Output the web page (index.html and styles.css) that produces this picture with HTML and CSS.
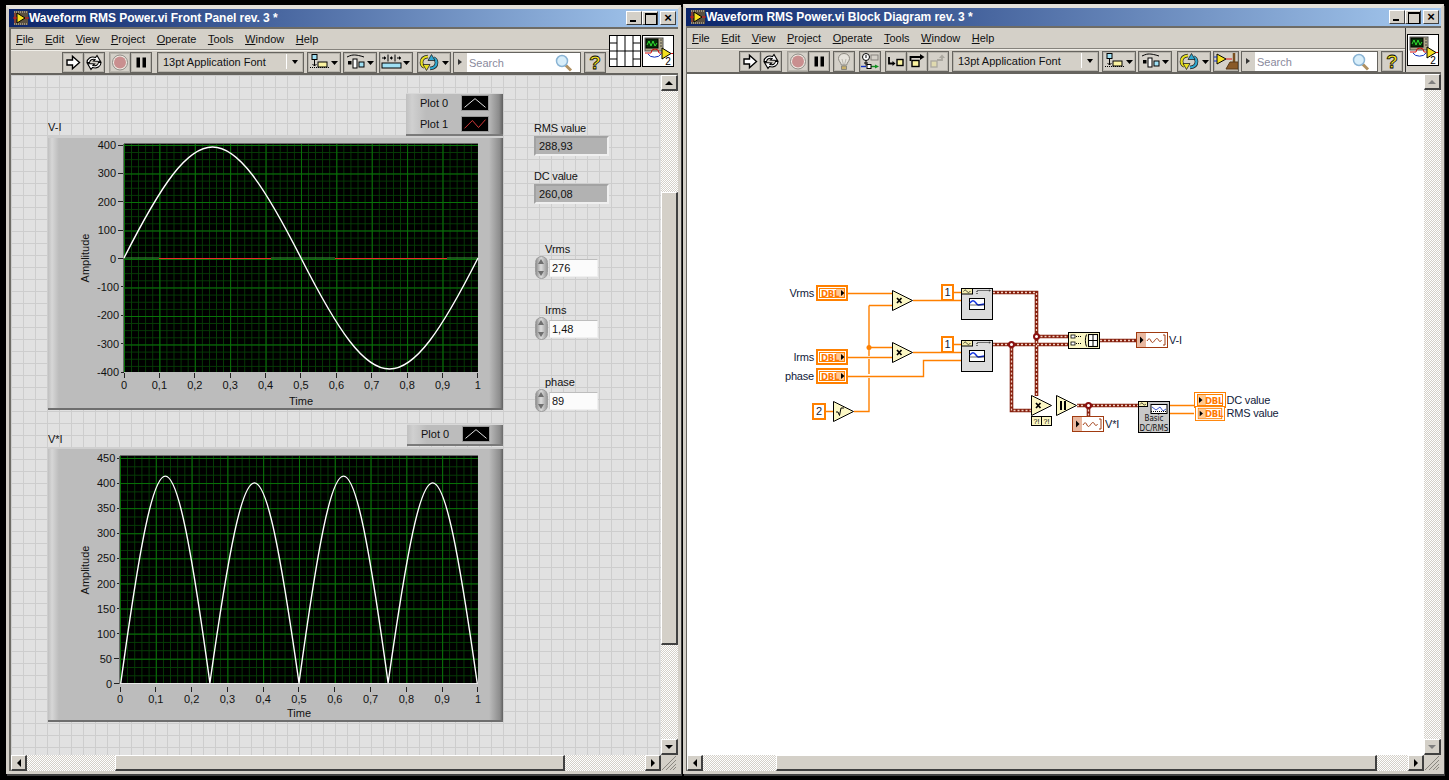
FILE: index.html
```html
<!DOCTYPE html>
<html lang="en">
<head>
<meta charset="utf-8">
<title>Waveform RMS Power.vi</title>
<link rel="stylesheet" href="styles.css">
</head>
<body>
<svg class="defs" aria-hidden="true">
  <symbol id="vi-mini" viewBox="0 0 16 16">
    <rect x="1" y="1" width="14" height="14" fill="#5a5040"/>
    <path d="M1 2h14M1 14h14" stroke="#d8d0b8" stroke-dasharray="1 1"/>
    <path d="M4 3v10l8-5z" fill="#f4e020" stroke="#000"/>
    <path d="M0 8h4M12 8h4" stroke="#e01010" stroke-width="1.2"/>
    <path d="M2 3v10" stroke="#e01010" stroke-width=".6"/>
  </symbol>
  <symbol id="run" viewBox="0 0 20 19"><path d="M4 7h5.500V3.200l7 6.300-7 6.300V12H4z" fill="#fff" stroke="#000" stroke-width="1.4"/></symbol>
  <symbol id="runc" viewBox="0 0 20 19">
    <g fill="#fff" stroke="#000" stroke-width="1.1">
      <path d="M3 9.500C3 5.500 7 3 11.500 4.500L13 2.500 16.500 8.500 9.500 8 11 6.500C8 5.800 6 7 5.500 9.500z"/>
      <path d="M17 9.500C17 13.500 13 16 8.500 14.500L7 16.500 3.500 10.500 10.500 11 9 12.500C12 13.200 14 12 14.500 9.500z"/>
    </g>
  </symbol>
  <symbol id="stop" viewBox="0 0 20 19"><circle cx="10" cy="9.500" r="7.500" fill="#f0ece4" stroke="#8e8b85"/><circle cx="10" cy="9.500" r="6" fill="#c98f8f"/></symbol>
  <symbol id="pause" viewBox="0 0 20 19"><path d="M5.500 4.500h3.500v10H5.500zM11.500 4.500h3.500v10h-3.500z"/></symbol>
  <symbol id="bulb" viewBox="0 0 20 19"><path d="M10 1.500c-3.500 0-5.500 2.500-5.500 5 0 2.500 2.500 4 2.800 6.500h5.400c.3-2.500 2.800-4 2.800-6.500 0-2.500-2-5-5.500-5z" fill="#e6e3dc" stroke="#8b8880"/><path d="M8 7l1.500 6M12 7l-1.500 6" stroke="#a5a29a" fill="none" stroke-width=".7"/><path d="M7.500 14h5v3.500h-5z" fill="#c9b06a" stroke="#8b8880"/></symbol>
  <symbol id="probe" viewBox="0 0 20 19"><circle cx="6" cy="5" r="3.500" fill="#fff" stroke="#000"/><path d="M6 3v3M6 8.500v5M4 11h4" stroke="#000" fill="none"/><rect x="11" y="3" width="7" height="5" fill="#d4d0c8" stroke="#85827c"/><path d="M1 14.500h5" stroke="#1030c0" stroke-width="1.400"/><path d="M10 14.500h6" stroke="#109020" stroke-width="1.400"/><rect x="7" y="12.500" width="4" height="4" fill="#fff" stroke="#000"/><path d="M15 12.500l4 2-4 2z" fill="#109020"/></symbol>
  <symbol id="stepin" viewBox="0 0 20 19"><path d="M3 5v6.500h4" stroke="#000" stroke-width="1.800" fill="none"/><path d="M6.500 9l3 2.500-3 2.500z"/><rect x="11" y="7.500" width="6" height="6" fill="#fbf3a0" stroke="#000" stroke-width="1.400"/></symbol>
  <symbol id="stepover" viewBox="0 0 20 19"><path d="M3.500 9V5h10" stroke="#000" stroke-width="1.800" fill="none"/><path d="M13 2l4.500 3-4.500 3z"/><rect x="5" y="8.500" width="7" height="6" fill="#fbf3a0" stroke="#000" stroke-width="1.400"/></symbol>
  <symbol id="stepout" viewBox="0 0 20 19" opacity=".6"><rect x="3" y="9" width="6" height="6" fill="#e8e2a0" stroke="#8f8c84" stroke-width="1.300"/><path d="M9 8h5V5" stroke="#8f8c84" stroke-width="1.800" fill="none"/><path d="M11 6l3-3.500 3 3.500z" fill="#8f8c84"/></symbol>
  <symbol id="align" viewBox="0 0 32 19">
    <rect x="4" y="1.500" width="5" height="5" fill="#9fe0f4" stroke="#000"/>
    <path d="M6.500 7v6M4.500 11l2 2 2-2" stroke="#000" fill="none"/>
    <path d="M2 14.500h20" stroke="#000" stroke-dasharray="1 1"/>
    <rect x="10" y="9" width="9" height="5" fill="#fbf3a0" stroke="#000"/>
    <path d="M23 8h7l-3.500 4z"/>
  </symbol>
  <symbol id="dist" viewBox="0 0 32 19">
    <path d="M3 4c4-2 6-2 7-2 1 0 4 0 10 2" stroke="#000" fill="none"/>
    <rect x="4" y="8" width="3.500" height="3.500"/>
    <rect x="9" y="6" width="4" height="9" fill="#fff" stroke="#000"/>
    <rect x="15" y="9" width="5" height="5" fill="#9fe0f4" stroke="#000"/>
    <path d="M23 8h7l-3.500 4z"/>
  </symbol>
  <symbol id="resize" viewBox="0 0 32 19">
    <path d="M8 1.500v7M15 1.500v7M2 5h4M10 5h3M17 5h4" stroke="#000" fill="none"/>
    <path d="M4 3l2 2-2 2zM12 3l-2 2 2 2zM19 3l2 2-2 2z"/>
    <rect x="2" y="10" width="19" height="5" fill="#9fe0f4" stroke="#000"/>
    <path d="M23 8h7l-3.500 4z"/>
  </symbol>
  <symbol id="reorder" viewBox="0 0 32 19">
    <path d="M10 3.500C5 4 3.500 7 3.500 9.500c0 2 1 3.500 3 4.500" stroke="#222" stroke-width="3.600" fill="none"/>
    <path d="M10 3.500C5 4 3.500 7 3.500 9.500c0 2 1 3.500 3 4.500" stroke="#e8e020" stroke-width="2.200" fill="none"/>
    <path d="M5 11.500h7l-3.500 6z" fill="#e8e020" stroke="#222" stroke-width=".8"/>
    <path d="M12 15.500c5-.5 6.500-3.500 6.500-6 0-2-1-3.500-3-4.500" stroke="#222" stroke-width="3.600" fill="none"/>
    <path d="M12 15.500c5-.5 6.500-3.500 6.500-6 0-2-1-3.500-3-4.500" stroke="#30a8d0" stroke-width="2.200" fill="none"/>
    <path d="M10 7.500h7l-3.500-6z" fill="#30a8d0" stroke="#222" stroke-width=".8"/>
    <path d="M24 8h7l-3.500 4z"/>
  </symbol>
  <symbol id="clean" viewBox="0 0 24 19">
    <path d="M3 2v10l9-5z" fill="#f4e020" stroke="#000"/>
    <path d="M0 5h3M0 9h3" stroke="#1030c0"/><path d="M12 7h6" stroke="#e01010"/>
    <path d="M20 1v9" stroke="#7a5020" stroke-width="2.500"/>
    <path d="M12 17l4-7h8v7z" fill="#8a5a28" stroke="#5a3a18"/>
  </symbol>
  <symbol id="mag" viewBox="0 0 18 18"><path d="M10.500 11l5.500 5.500" stroke="#b09060" stroke-width="3"/><circle cx="7" cy="7" r="5.500" fill="#d8eefa" stroke="#8ab4d4" stroke-width="1.500"/></symbol>
  <symbol id="viicon" viewBox="0 0 32 32">
    <rect x=".5" y=".5" width="31" height="31" fill="#fff" stroke="#000"/>
    <rect x="3" y="3" width="18" height="13" fill="#b0a888" stroke="#555"/>
    <rect x="4" y="4" width="12" height="9" fill="#083008" stroke="#000"/>
    <path d="M5 10l2-4 2 5 2-5 2 5 2-3" stroke="#30e030" fill="none"/>
    <path d="M18 5h2M18 8h2M18 11h2" stroke="#444"/>
    <path d="M3 18h6a4 4 0 0 1 8 0h5" stroke="#d01010" fill="none"/>
    <path d="M6 19a7 5 0 0 0 13 0" stroke="#1030c0" fill="none"/>
    <path d="M20 13v11l9-5.500z" fill="#f4e020" stroke="#000"/>
    <path d="M29 18.500h2" stroke="#d01010"/>
  </symbol>
  <symbol id="pane" viewBox="0 0 32 32">
    <rect x=".5" y=".5" width="31" height="31" fill="#fff" stroke="#000"/>
    <path d="M8 0v32M16 0v32M24 0v32M0 16h32M0 8h8M0 24h8M24 8h8M24 24h8" stroke="#000" fill="none"/>
  </symbol>
  <symbol id="grip" viewBox="0 0 16 16"><path d="M15 5L5 15M15 9l-6 6M15 12l-3 3M15 1L1 15" stroke="#8a8780"/></symbol>
  <symbol id="ctl" viewBox="0 0 32 16">
    <rect x="1" y="1" width="30" height="14" fill="#fff" stroke="#ff8000" stroke-width="2"/>
    <rect x="3.500" y="3.500" width="25" height="9" fill="#fff" stroke="#ff8000"/>
    <rect x="20" y="4" width="8" height="8" fill="#ffc890"/>
    <path d="M25 5l3.500 3-3.500 3z"/>
  </symbol>
  <symbol id="ind" viewBox="0 0 32 16">
    <rect x=".5" y=".5" width="31" height="15" fill="#fff" stroke="#ff8000"/>
    <rect x="3.500" y="2.500" width="25" height="11" fill="#fff" stroke="#ff8000"/>
    <rect x="4" y="3" width="8" height="10" fill="#ffc890"/>
    <path d="M5 5l3.500 3-3.500 3z"/>
  </symbol>
  <symbol id="wfmind" viewBox="0 0 32 16">
    <rect x=".5" y=".5" width="31" height="15" fill="#fff" stroke="#a03a10"/>
    <rect x="1" y="1" width="9" height="14" fill="#e8b8a0"/>
    <path d="M4 4.500l3.500 3.500L4 11.500z"/>
    <path d="M11 9c2-3 2.500-3 4 0s2.500 1 4-1 2.500-2 3.500 0 2 2 3 0" stroke="#a03a10" fill="none"/>
    <path d="M27 3h2v10h-2" stroke="#a03a10" fill="none"/>
  </symbol>
  <symbol id="wfmnode" viewBox="0 0 32 32">
    <rect x=".5" y=".5" width="31" height="31" fill="#dcdcdc" stroke="#000"/>
    <rect x=".5" y=".5" width="11" height="5.500" fill="#f4eeb0" stroke="#000"/>
    <path d="M2.500 3.500c1.500-2 2-2 3.500 0s2 1 3.500-.5" stroke="#000" fill="none" stroke-width=".7"/>
    <path d="M16 6V2.500h13l-1-1.500M29 2.500l-1 1.500" stroke="#000" stroke-dasharray="1 1" fill="none"/>
    <rect x="8.500" y="10.500" width="15" height="11" fill="#fff" stroke="#000"/>
    <path d="M9 15c2-3 4-3 6 0s3 2 8 1" stroke="#1030e0" fill="none" stroke-width="1.400"/>
    <path d="M9 17h14" stroke="#000" stroke-width=".6"/>
  </symbol>
  <symbol id="build" viewBox="0 0 32 17">
    <rect x=".5" y=".5" width="31" height="16" fill="#fbf7c4" stroke="#000"/>
    <rect x="3" y="3" width="4" height="3" fill="#fff" stroke="#000" stroke-width=".8"/>
    <rect x="3" y="10" width="4" height="3" fill="#fff" stroke="#000" stroke-width=".8"/>
    <path d="M8 4.500h6M8 11.500h6" stroke="#000" stroke-dasharray="1 1"/>
    <path d="M18.500 2.500c-1.500 3-1.500 9 0 12" stroke="#000" fill="none"/>
    <rect x="20.500" y="2.500" width="9" height="12" fill="#fff" stroke="#000" stroke-width="1.100"/>
    <path d="M25 2.500v12M20.500 8.500h9" stroke="#000"/>
  </symbol>
  <symbol id="tri-x" viewBox="0 0 21 21"><path d="M.5.500v20l20-10z" fill="#fbf7c4" stroke="#000"/><path d="M5 8l4.500 5M9.500 8L5 13" stroke="#000" stroke-width="1.700"/></symbol>
  <symbol id="tri-sqrt" viewBox="0 0 21 21"><path d="M.5.500v20l20-10z" fill="#fbf7c4" stroke="#000"/><path d="M3 11l2 0 1.500 3.500L8 7h3" stroke="#000" fill="none"/></symbol>
  <symbol id="tri-bar" viewBox="0 0 21 21"><path d="M.5.500v20l20-10z" fill="#fbf7c4" stroke="#000"/><path d="M4 6h2v9H4zM8 6h2v9H8z"/></symbol>
  <symbol id="dcnode" viewBox="0 0 32 32">
    <rect x=".5" y=".5" width="31" height="31" fill="#c8c8c8" stroke="#000"/>
    <rect x=".5" y=".5" width="9" height="5" fill="#f4eeb0" stroke="#000"/>
    <path d="M2 3.500c1.500-2 2-2 3-.5s2 1 3 0" stroke="#000" fill="none" stroke-width=".7"/>
    <rect x="13" y="3.500" width="16" height="9" fill="#fff" stroke="#000"/>
    <path d="M14 6l4 3 4-3 3 4 3-2" stroke="#1030c0" fill="none" stroke-width=".8"/>
    <path d="M13 10.500h16" stroke="#000" stroke-dasharray="1 1"/>
  </symbol>
</svg>

<section class="window win-left">
  <header class="title">
    <svg class="title-icon"><use href="#vi-mini"/></svg>
    <span class="title-text">Waveform RMS Power.vi Front Panel rev. 3 *</span>
    <div class="capbtns">
      <span class="cap cap-min"></span><span class="cap cap-max"></span><span class="cap cap-close">×</span>
    </div>
  </header>
  <div class="client">
    <div class="head">
      <div class="head-main">
        <nav class="menu">
          <span><u>F</u>ile</span><span><u>E</u>dit</span><span><u>V</u>iew</span><span><u>P</u>roject</span><span><u>O</u>perate</span><span><u>T</u>ools</span><span><u>W</u>indow</span><span><u>H</u>elp</span>
        </nav>
        <div class="toolbar tb-left">
          <span class="tb"><svg><use href="#run"/></svg></span>
          <span class="tb join"><svg><use href="#runc"/></svg></span>
          <span class="tb dis m4"><svg><use href="#stop"/></svg></span>
          <span class="tb join"><svg><use href="#pause"/></svg></span>
          <span class="fontring m5"><span class="fontname">13pt Application Font</span><span class="caret"></span></span>
          <span class="tb wide m3"><svg><use href="#align"/></svg></span>
          <span class="tb wide m2"><svg><use href="#dist"/></svg></span>
          <span class="tb wide m2"><svg><use href="#resize"/></svg></span>
          <span class="tb wide m4"><svg><use href="#reorder"/></svg></span>
          <span class="search search-left m2"><span class="search-arrow"></span><span class="search-field">Search<svg class="mag"><use href="#mag"/></svg></span></span>
          <span class="tb m3"><span class="help">?</span></span>
        </div>
      </div>
      <div class="pane-box pane-left">
        <svg class="icon32"><use href="#pane"/></svg>
        <svg class="icon32" viewBox="0 0 32 32"><use href="#viicon" width="32" height="32"/><text x="26" y="30" class="vi2">2</text></svg>
      </div>
    </div>
    <div class="main">
      <div class="canvas fp">
        <div class="gwrap gw1">
          <div class="glabel">V-I</div>
          <div class="graph g1">
            <div class="gbody">
              <div class="amp"><span>Amplitude</span></div>
              <div class="yscale">
                <span>400</span><span>300</span><span>200</span><span>100</span><span>0</span><span>-100</span><span>-200</span><span>-300</span><span>-400</span>
              </div>
              <div class="plot">
                <svg class="curve" viewBox="0 0 354 228">
                  <path class="c-green" d="M0 114H35M147 114H211M323 114H354"/>
                  <path class="c-red" d="M35 114.500H147M211 114.500H323"/>
                  <path class="c-white" d="M0 114C75 -34 102 -34 177 114S279 262 354 114"/>
                </svg>
              </div>
            </div>
            <div class="xscale">
              <span>0</span><span>0,1</span><span>0,2</span><span>0,3</span><span>0,4</span><span>0,5</span><span>0,6</span><span>0,7</span><span>0,8</span><span>0,9</span><span>1</span>
            </div>
            <div class="xtitle">Time</div>
          </div>
        </div>
        <div class="gwrap gw2">
          <div class="glabel">V*I</div>
          <div class="graph g2">
            <div class="gbody">
              <div class="amp"><span>Amplitude</span></div>
              <div class="yscale">
                <span>450</span><span>400</span><span>350</span><span>300</span><span>250</span><span>200</span><span>150</span><span>100</span><span>50</span><span>0</span>
              </div>
              <div class="plot">
                <svg class="curve" viewBox="0 0 358 228">
                  <path class="c-white" d="M0 228C38 -49 51.500 -49 89.500 228C127.500 -40 141 -40 179 228C217 -49 230.500 -49 268.500 228C306.500 -40 320 -40 358 228"/>
                </svg>
              </div>
            </div>
            <div class="xscale">
              <span>0</span><span>0,1</span><span>0,2</span><span>0,3</span><span>0,4</span><span>0,5</span><span>0,6</span><span>0,7</span><span>0,8</span><span>0,9</span><span>1</span>
            </div>
            <div class="xtitle">Time</div>
          </div>
        </div>
        <div class="legend lg1">
          <div class="lrow"><span>Plot 0</span><svg class="swatch" viewBox="0 0 28 16"><path class="sw-w" d="M2 13L14 3l12 10"/></svg></div>
          <div class="lrow"><span>Plot 1</span><svg class="swatch" viewBox="0 0 28 16"><path class="sw-r" d="M2 13L11 4l7 8 8-9"/></svg></div>
        </div>
        <div class="legend lg2">
          <div class="lrow"><span>Plot 0</span><svg class="swatch" viewBox="0 0 28 16"><path class="sw-w" d="M2 13L14 3l12 10"/></svg></div>
        </div>
        <div class="num n-rms"><div class="numlabel">RMS value</div><div class="indicator">288,93</div></div>
        <div class="num n-dc"><div class="numlabel">DC value</div><div class="indicator">260,08</div></div>
        <div class="ctrl c-vrms"><div class="ctrllabel">Vrms</div><div class="ctrlrow"><span class="spin"></span><span class="input">276</span></div></div>
        <div class="ctrl c-irms"><div class="ctrllabel">Irms</div><div class="ctrlrow"><span class="spin"></span><span class="input">1,48</span></div></div>
        <div class="ctrl c-phase"><div class="ctrllabel">phase</div><div class="ctrlrow"><span class="spin"></span><span class="input">89</span></div></div>
      </div>
      <div class="vscroll">
        <span class="sbtn up"></span>
        <div class="track vtrack"><span class="vthumb"></span></div>
        <span class="sbtn down"></span>
      </div>
    </div>
    <div class="hscroll">
      <span class="sbtn left"></span>
      <div class="track htrack"><span class="hthumb hthumb-l"></span></div>
      <span class="sbtn right"></span>
      <span class="corner"><svg><use href="#grip"/></svg></span>
    </div>
  </div>
</section>

<section class="window win-right">
  <header class="title">
    <svg class="title-icon"><use href="#vi-mini"/></svg>
    <span class="title-text">Waveform RMS Power.vi Block Diagram rev. 3 *</span>
    <div class="capbtns">
      <span class="cap cap-min"></span><span class="cap cap-max"></span><span class="cap cap-close">×</span>
    </div>
  </header>
  <div class="client">
    <div class="head">
      <div class="head-main">
        <nav class="menu">
          <span><u>F</u>ile</span><span><u>E</u>dit</span><span><u>V</u>iew</span><span><u>P</u>roject</span><span><u>O</u>perate</span><span><u>T</u>ools</span><span><u>W</u>indow</span><span><u>H</u>elp</span>
        </nav>
        <div class="toolbar tb-right">
          <span class="tb"><svg><use href="#run"/></svg></span>
          <span class="tb join"><svg><use href="#runc"/></svg></span>
          <span class="tb dis m5"><svg><use href="#stop"/></svg></span>
          <span class="tb join"><svg><use href="#pause"/></svg></span>
          <span class="tb m3"><svg><use href="#bulb"/></svg></span>
          <span class="tb m4"><svg><use href="#probe"/></svg></span>
          <span class="tb m4"><svg><use href="#stepin"/></svg></span>
          <span class="tb join"><svg><use href="#stepover"/></svg></span>
          <span class="tb join"><svg><use href="#stepout"/></svg></span>
          <span class="fontring m3"><span class="fontname">13pt Application Font</span><span class="caret"></span></span>
          <span class="tb wide m3"><svg><use href="#align"/></svg></span>
          <span class="tb wide m2"><svg><use href="#dist"/></svg></span>
          <span class="tb wide m5"><svg><use href="#reorder"/></svg></span>
          <span class="tb clean m2"><svg><use href="#clean"/></svg></span>
          <span class="search search-right m2"><span class="search-arrow"></span><span class="search-field">Search<svg class="mag"><use href="#mag"/></svg></span></span>
          <span class="tb m3"><span class="help">?</span></span>
        </div>
      </div>
      <div class="pane-box pane-right">
        <svg class="icon32" viewBox="0 0 32 32"><use href="#viicon" width="32" height="32"/><text x="26" y="30" class="vi2">2</text></svg>
      </div>
    </div>
    <div class="main">
      <div class="canvas bd">
        <svg class="diagram" viewBox="687 74 737 681">
          <g class="w-o">
            <path d="M848 293.500H892M869 305.500H892M869 305.500V356M869 359V374M869 378V411.500H854M869 347.500H892M848 357.500H892M848 376.500H923.500V360.500H961M913 300.500H961M913 352.500H961M953 292.500H961M953 344.500H961M825 411.500H833"/>
            <path d="M1170 405.500H1194M1170 413.500H1194"/>
          </g>
          <circle class="dot-o" cx="869" cy="347.500" r="2.500"/>
          <g class="w-b">
            <path d="M993 292.500H1036.500V396M993 344.500H1069M1011.500 344.500V410.500H1032M1036.500 336.500H1069M1100 340.500H1136M1077 405.500H1138M1088.500 405.500V416"/>
          </g>
          <g class="w-d">
            <path d="M993 292.500H1036.500V396M993 344.500H1069M1011.500 344.500V410.500H1032M1036.500 336.500H1069M1100 340.500H1136M1077 405.500H1138M1088.500 405.500V416"/>
          </g>
          <circle class="dot-b" cx="1036.500" cy="336.500" r="2.500"/>
          <circle class="dot-b" cx="1011.500" cy="344.500" r="2.500"/>
          <circle class="dot-b" cx="1088.500" cy="405.500" r="2.500"/>

          <use href="#ctl" x="816" y="285" width="32" height="16"/>
          <text class="dbl" x="821" y="296.500">DBL</text>
          <use href="#ctl" x="816" y="349" width="32" height="16"/>
          <text class="dbl" x="821" y="360.500">DBL</text>
          <use href="#ctl" x="816" y="368" width="32" height="16"/>
          <text class="dbl" x="821" y="379.500">DBL</text>
          <text class="dl end" x="814" y="297">Vrms</text>
          <text class="dl end" x="814" y="361">Irms</text>
          <text class="dl end" x="814" y="380">phase</text>

          <rect class="const" x="813" y="404" width="12" height="15"/>
          <text class="dl mid" x="819" y="415">2</text>
          <rect class="const" x="942" y="285" width="11" height="15"/>
          <text class="dl mid" x="947.500" y="296">1</text>
          <rect class="const" x="942" y="337" width="11" height="15"/>
          <text class="dl mid" x="947.500" y="348">1</text>

          <use href="#tri-sqrt" x="833" y="401" width="21" height="21"/>
          <use href="#tri-x" x="892" y="290" width="21" height="21"/>
          <use href="#tri-x" x="892" y="342" width="21" height="21"/>
          <use href="#wfmnode" x="961" y="288" width="32" height="32"/>
          <use href="#wfmnode" x="961" y="340" width="32" height="32"/>
          <use href="#build" x="1068" y="332" width="32" height="17"/>
          <use href="#wfmind" x="1136" y="332" width="32" height="16"/>
          <text class="dl" x="1169" y="344">V-I</text>

          <use href="#tri-x" x="1031" y="395" width="21" height="21"/>
          <rect class="q" x="1031.500" y="416.500" width="10" height="9"/>
          <rect class="q" x="1041.500" y="416.500" width="10" height="9"/>
          <text class="qt" x="1036.500" y="424">?!</text>
          <text class="qt" x="1046.500" y="424">?!</text>
          <use href="#tri-bar" x="1056" y="395" width="21" height="21"/>
          <use href="#wfmind" x="1072" y="416" width="32" height="16"/>
          <text class="dl" x="1105" y="428">V*I</text>

          <use href="#dcnode" x="1138" y="401" width="32" height="32"/>
          <text class="dn" x="1154" y="421">Basic</text>
          <text class="dn" x="1154" y="431">DC/RMS</text>

          <use href="#ind" x="1194" y="392" width="32" height="16"/>
          <text class="dbl" x="1205" y="403.500">DBL</text>
          <use href="#ind" x="1194" y="406" width="32" height="15"/>
          <text class="dbl" x="1205" y="417">DBL</text>
          <text class="dl" x="1226.500" y="404">DC value</text>
          <text class="dl" x="1226.500" y="417">RMS value</text>
        </svg>
      </div>
      <div class="vscroll">
        <span class="sbtn up off"></span>
        <div class="track vtrack"></div>
        <span class="sbtn down off"></span>
      </div>
    </div>
    <div class="hscroll">
      <span class="sbtn left"></span>
      <div class="track htrack"><span class="hthumb hthumb-r"></span></div>
      <span class="sbtn right"></span>
      <span class="corner"><svg><use href="#grip"/></svg></span>
    </div>
  </div>
</section>
</body>
</html>
```
FILE: styles.css
```css
* { box-sizing: border-box; }
html, body { margin: 0; height: 100%; }
body {
  background: #000;
  font-family: "Liberation Sans", "Noto Sans", sans-serif;
  font-size: 11px;
  color: #111;
  overflow: hidden;
  position: relative;
}
.defs { position: absolute; width: 0; height: 0; }
.vi2 { font: 10px "Liberation Sans", sans-serif; text-anchor: middle; }
.dbl { font: bold 8.5px "DejaVu Sans", sans-serif; fill: #ff7800; letter-spacing: -.3px; }

/* windows */
.window {
  position: absolute;
  display: flex;
  flex-direction: column;
  background: #d4d0c8;
  border: 3px solid #d4d0c8;
  border-top-width: 4px;
  border-top-color: #e4e1da;
  box-shadow: 1px 2px 0 #404040;
}
.win-left { left: 6px; top: 5px; width: 675px; height: 769px; }
.win-right { left: 683px; top: 4px; width: 761px; height: 770px; }

.title {
  flex: 0 0 18px;
  display: flex;
  align-items: center;
  padding: 0 2px 0 4px;
  background: linear-gradient(90deg, #0a246a, #a6caf0);
  color: #fff;
  font-weight: 700;
  font-size: 12px;
  letter-spacing: -.05px;
  white-space: nowrap;
}
.title-icon { width: 16px; height: 16px; flex: none; }
.title-text { flex: 1; }
.capbtns { display: flex; align-items: center; }
.cap {
  width: 16px; height: 14px;
  background: #d4d0c8;
  border: 1px solid;
  border-color: #fff #404040 #404040 #fff;
  position: relative;
  color: #000;
  font: bold 13px/11px "Liberation Sans", sans-serif;
  text-align: center;
}
.cap-close { margin-left: 2px; }
.cap-min::before { content: ""; position: absolute; left: 3px; bottom: 2px; width: 6px; height: 2px; background: #000; }
.cap-max::before { content: ""; position: absolute; left: 2px; top: 1px; width: 10px; height: 9px; border: 1px solid #000; border-top-width: 2px; }

.client {
  flex: 1;
  min-height: 0;
  display: flex;
  flex-direction: column;
  border-top: 2px solid #6e6c66;
  border-left: 2px solid #6e6c66;
}
.win-right .client { border-left-width: 1px; }

.head { display: flex; flex: none; border-bottom: 2px solid #66645f; }
.head-main { flex: 1; min-width: 0; }
.menu {
  height: 21px;
  display: flex;
  align-items: center;
  gap: 11.5px;
  padding: 0 0 1px 5px;
  border-bottom: 1px solid #85827c;
  box-shadow: 0 1px 0 #f0eee8;
  font-size: 11px;
  white-space: nowrap;
}
.toolbar {
  height: 23px;
  display: flex;
  align-items: flex-start;
  padding-top: 2px;
}
.tb-left { padding-left: 51px; }
.tb-right { padding-left: 52px; }
.tb {
  flex: none;
  width: 22px;
  height: 21px;
  border: 1px solid #66645f;
  box-shadow: inset 0 0 0 1px #b8b5ad;
  display: flex;
  align-items: center;
  justify-content: center;
}
.tb svg { width: 20px; height: 19px; display: block; }
.tb.wide { width: 34px; }
.tb.wide svg { width: 32px; }
.tb.clean { width: 26px; }
.tb.clean svg { width: 24px; }
.tb.dis { border-color: #a09d96; }
.join { margin-left: -1px; }
.m2 { margin-left: 2px; }
.m3 { margin-left: 3px; }
.m4 { margin-left: 4px; }
.m5 { margin-left: 5px; }

.fontring {
  flex: none;
  width: 147px;
  height: 21px;
  border: 1px solid #66645f;
  box-shadow: inset 0 0 0 1px #b8b5ad;
  display: flex;
  align-items: center;
  padding: 0 0 2px 5px;
  white-space: nowrap;
}
.fontname { flex: 1; }
.caret {
  flex: none;
  width: 17px;
  height: 15px;
  border-left: 1px solid #fff;
  position: relative;
}
.caret::after {
  content: "";
  position: absolute;
  left: 5px; top: 6px;
  border: 3.5px solid transparent;
  border-top: 4px solid #000;
  border-bottom: 0;
}
.search {
  flex: none;
  height: 21px;
  display: flex;
  border: 1px solid #66645f;
}
.search-left { width: 128px; }
.search-right { width: 137px; }
.search-arrow { flex: 0 0 13px; position: relative; }
.search-arrow::after {
  content: "";
  position: absolute;
  left: 4px; top: 6px;
  border: 3.5px solid transparent;
  border-left: 4px solid #333;
  border-right: 0;
}
.search-field {
  flex: 1;
  background: #fff;
  color: #8a8a9c;
  display: flex;
  align-items: center;
  justify-content: space-between;
  padding: 0 7px 0 2px;
}
.mag { width: 18px; height: 18px; }
.help {
  font: bold 19px/19px "Liberation Sans", sans-serif;
  color: #f4e020;
  -webkit-text-stroke: .8px #000;
}
.pane-box { flex: none; display: flex; align-items: center; gap: 1px; }
.pane-left { padding: 0 4px 1px 0; }
.pane-right { padding: 0 2px 1px 1px; border-left: 1px solid #333; }
.icon32 { width: 32px; height: 32px; display: block; }

/* main area */
.main { flex: 1; min-height: 0; display: flex; }
.canvas { flex: 1; min-width: 0; position: relative; overflow: hidden; }
.bd { background: #fff; }
.fp {
  background:
    linear-gradient(90deg, #cdcdcd 1px, transparent 1px) 0 0 / 12px 12px,
    linear-gradient(#cdcdcd 1px, transparent 1px) 0 0 / 12px 12px,
    #e1e1e1;
}
.diagram { display: block; width: 737px; height: 681px; }

/* scrollbars */
.track { background: repeating-conic-gradient(#d4d0c8 0 25%, #fff 0 50%) 0 0 / 2px 2px; }
.vscroll { flex: 0 0 17px; display: flex; flex-direction: column; }
.vtrack { flex: 1; display: flex; flex-direction: column; }
.vthumb { display: block; margin-top: 101px; height: 453px; background: #d4d0c8; border: solid; border-color: #fff #404040 #404040 #fff; border-width: 1px 2px 2px 1px; }
.hscroll { flex: 0 0 16px; display: flex; }
.htrack { flex: 1; display: flex; }
.hthumb { display: block; height: 16px; background: #d4d0c8; border: solid; border-color: #fff #404040 #404040 #fff; border-width: 1px 2px 2px 1px; }
.hthumb-l { margin-left: 88px; width: 450px; }
.hthumb-r { margin-left: 73px; width: 601px; }
.sbtn {
  flex: none;
  display: flex;
  align-items: center;
  justify-content: center;
  background: #d4d0c8;
  border: solid;
  border-color: #fff #404040 #404040 #fff;
  border-width: 1px 2px 2px 1px;
}
.up, .down { height: 16px; }
.left, .right { width: 16px; height: 16px; }
.up::before { content: ""; border: 4px solid transparent; border-bottom: 4px solid #000; border-top: 0; }
.down::before { content: ""; border: 4px solid transparent; border-top: 4px solid #000; border-bottom: 0; }
.left::before { content: ""; border: 4px solid transparent; border-right: 4px solid #000; border-left: 0; }
.right::before { content: ""; border: 4px solid transparent; border-left: 4px solid #000; border-right: 0; }
.off.up::before { border-bottom-color: #808080; }
.off.down::before { border-top-color: #808080; }
.corner { flex: 0 0 17px; background: #d4d0c8; }
.corner svg { width: 16px; height: 16px; display: block; }

/* graphs */
.gwrap { position: absolute; left: 37px; width: 455px; }
.gw1 { top: 44px; }
.gw2 { top: 355px; }
.glabel { height: 17px; line-height: 17px; }
.gw2 .glabel { line-height: 19px; }
.graph {
  display: flex;
  flex-direction: column;
  background: linear-gradient(90deg, #c0c0c0 0, #d6d6d6 4px, #bcbcbc 11px, #bcbcbc 441px, #8c8c8c 452px, #5f5f5f 455px);
  border-top: 2px solid #cfcfcf;
  border-bottom: 2px solid #6e6e6e;
}
.g1 { height: 274px; }
.g2 { height: 275px; }
.gbody { display: flex; }
.g1 .gbody { padding-top: 6px; }
.g2 .gbody { padding-top: 7px; }
.amp {
  flex: none;
  width: 49px;
  height: 228px;
  display: flex;
  align-items: center;
  justify-content: center;
  padding-left: 25px;
}
.amp span { transform: rotate(-90deg); white-space: nowrap; }
.yscale {
  flex: none;
  display: flex;
  flex-direction: column;
  justify-content: space-between;
}
.yscale span {
  height: 0;
  display: flex;
  align-items: center;
  justify-content: flex-end;
  gap: 2px;
}
.yscale span::after { content: ""; width: 6px; height: 1px; background: #222; }
.g1 .yscale { width: 27px; height: 227px; margin-top: 1px; }
.g2 .yscale { width: 23px; height: 226px; margin-top: 2px; }
.plot { flex: none; height: 228px; position: relative; box-shadow: 0 -1px 0 #6a6a6a, -1px 0 0 #6a6a6a; }
.g1 .plot {
  width: 354px;
  background:
    linear-gradient(90deg, #087208 1px, transparent 1px) 0 0 / 35.4px 100%,
    linear-gradient(#087208 1px, transparent 1px) 0 1px / 100% 28.5px,
    linear-gradient(90deg, #063e06 1px, transparent 1px) 0 0 / 7.08px 100%,
    linear-gradient(#063e06 1px, transparent 1px) 0 1px / 100% 7.125px,
    #000;
}
.g2 .plot {
  width: 358px;
  background:
    linear-gradient(90deg, #087208 1px, transparent 1px) 0 0 / 35.8px 100%,
    linear-gradient(#087208 1px, transparent 1px) 0 2px / 100% 25.1px,
    linear-gradient(90deg, #063e06 1px, transparent 1px) 0 0 / 7.16px 100%,
    linear-gradient(#063e06 1px, transparent 1px) 0 2px / 100% 8.37px,
    #000;
  border-bottom: 1px solid #e8e8e8;
}
.curve { position: absolute; inset: 0; width: 100%; height: 100%; overflow: visible; }
.c-white { fill: none; stroke: #fff; stroke-width: 1.4; }
.c-red { fill: none; stroke: #ee2a2a; stroke-width: 1; }
.c-green { fill: none; stroke: #3aa03a; stroke-width: 1; }
.xscale { display: flex; justify-content: space-between; }
.g1 .xscale { margin: 1px 25px 0 76px; }
.g2 .xscale { margin: 3px 25px 0 72px; }
.xscale span {
  width: 0;
  display: flex;
  flex-direction: column;
  align-items: center;
  white-space: nowrap;
  line-height: 14px;
}
.xscale span::before { content: ""; flex: none; width: 1px; height: 5px; background: #222; }
.xtitle { text-align: center; line-height: 14px; }
.g1 .xtitle { margin: 2px 0 0 51px; width: 404px; }
.g2 .xtitle { margin: 0 0 0 47px; width: 408px; }

/* legends */
.legend {
  position: absolute;
  width: 97px;
  padding-left: 14px;
  background: linear-gradient(90deg, #c0c0c0 0, #d0d0d0 6px, #bcbcbc 20px, #bcbcbc 82px, #8c8c8c 93px, #5f5f5f 97px);
  border-top: 1px solid #d8d8d8;
  border-bottom: 2px solid #7a7a7a;
  display: flex;
  flex-direction: column;
}
.lg1 { left: 395px; top: 18px; height: 43px; padding-top: 1px; gap: 5px; }
.lg2 { left: 396px; top: 349px; height: 22px; padding-top: 1px; width: 96px; }
.lrow { display: flex; align-items: center; height: 16px; }
.lrow span { flex: 0 0 41px; }
.swatch { width: 28px; height: 16px; background: #000; border: 1px solid #999; display: block; }
.sw-w { fill: none; stroke: #fff; stroke-width: 1; }
.sw-r { fill: none; stroke: #f04040; stroke-width: 1; }

/* numerics */
.num { position: absolute; left: 523px; width: 75px; }
.n-rms { top: 45px; }
.n-dc { top: 93px; }
.numlabel { height: 16px; line-height: 16px; letter-spacing: -.2px; }
.indicator {
  height: 20px;
  line-height: 17px;
  padding-left: 3px;
  background: #b2b2b2;
  border: 2px solid;
  border-color: #a2a2a2 #efefef #efefef #a2a2a2;
}
.ctrl { position: absolute; left: 524px; }
.c-vrms { top: 166px; }
.c-irms { top: 227px; }
.c-phase { top: 299px; }
.ctrllabel { height: 15px; line-height: 16px; padding-left: 10px; }
.ctrlrow { display: flex; align-items: center; }
.spin {
  width: 13px;
  height: 23px;
  border-radius: 7px;
  background: linear-gradient(90deg, #8f8f8f, #dcdcdc 45%, #9a9a9a);
  border: 1px solid #9c9c9c;
  position: relative;
}
.spin::before, .spin::after {
  content: "";
  position: absolute;
  left: 2px;
  border: 3.5px solid transparent;
}
.spin::before { top: 2px; border-bottom: 5px solid #6f6f6f; border-top: 0; }
.spin::after { bottom: 2px; border-top: 5px solid #6f6f6f; border-bottom: 0; }
.input {
  width: 49px;
  height: 18px;
  margin-left: 1px;
  padding-left: 2px;
  line-height: 16px;
  background: #fbfbfb;
  border: 1px solid;
  border-color: #bdbdbd #efefef #efefef #cfcfcf;
}

/* block diagram */
.dl { font-family: "Liberation Sans", sans-serif; font-size: 11px; letter-spacing: -.2px; fill: #111a3a; }
.end { text-anchor: end; }
.mid { text-anchor: middle; }
.w-o { fill: none; stroke: #ff8000; stroke-width: 1.4; }
.w-b { fill: none; stroke: #86200e; stroke-width: 3.6; }
.w-d { fill: none; stroke: #f2d0c4; stroke-width: 1.3; stroke-dasharray: 2 2; }
.dot-o { fill: #ff8000; }
.dot-b { fill: #fff; stroke: #8a1010; stroke-width: 2; }
.const { fill: #fff; stroke: #ff8000; stroke-width: 2; }
.q { fill: #fbf7c4; stroke: #000; }
.qt { font: 7px "Liberation Sans", sans-serif; text-anchor: middle; fill: #000; }
.dn { font: 8px "DejaVu Sans Condensed", "Liberation Sans", sans-serif; text-anchor: middle; fill: #111; }
```
